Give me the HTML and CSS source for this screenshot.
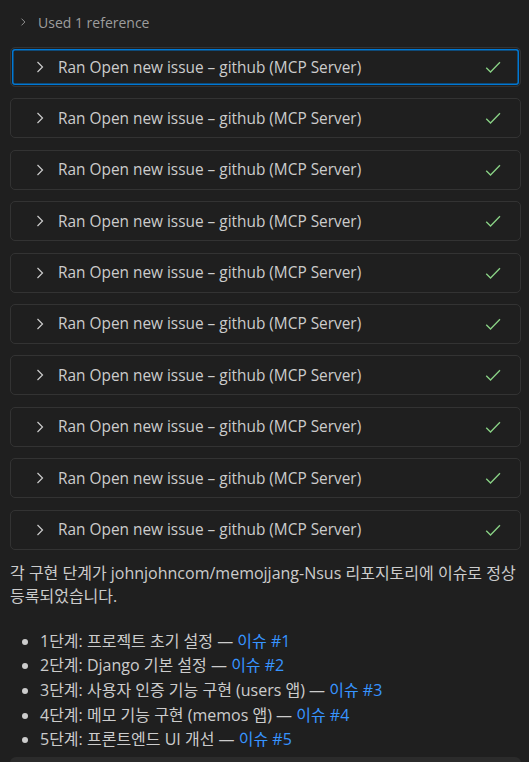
FILE: index.html
```html
<!DOCTYPE html>
<html lang="ko">
<head>
<meta charset="utf-8">
<link rel="stylesheet" href="styles.css">
</head>
<body>
<div class="chat">
  <div class="refs">
    <svg class="chev-small" viewBox="0 0 16 16" width="12" height="12"><path d="M6 3.5l4.5 4.5L6 12.5" fill="none" stroke="currentColor" stroke-width="1.2"/></svg>
    <span>Used 1 reference</span>
  </div>
  <div class="tools">
    <div class="tool focused"><svg class="chev" viewBox="0 0 16 16" width="16" height="16"><path d="M5.5 3l5 5-5 5" fill="none" stroke="currentColor" stroke-width="1.2"/></svg><span class="label">Ran Open new issue – github (MCP Server)</span><svg class="check" viewBox="0 0 16 16" width="18" height="18"><path d="M2 8.6l3.8 3.8L14.2 3.8" fill="none" stroke="currentColor" stroke-width="1.2"/></svg></div>
    <div class="tool"><svg class="chev" viewBox="0 0 16 16" width="16" height="16"><path d="M5.5 3l5 5-5 5" fill="none" stroke="currentColor" stroke-width="1.2"/></svg><span class="label">Ran Open new issue – github (MCP Server)</span><svg class="check" viewBox="0 0 16 16" width="18" height="18"><path d="M2 8.6l3.8 3.8L14.2 3.8" fill="none" stroke="currentColor" stroke-width="1.2"/></svg></div>
    <div class="tool"><svg class="chev" viewBox="0 0 16 16" width="16" height="16"><path d="M5.5 3l5 5-5 5" fill="none" stroke="currentColor" stroke-width="1.2"/></svg><span class="label">Ran Open new issue – github (MCP Server)</span><svg class="check" viewBox="0 0 16 16" width="18" height="18"><path d="M2 8.6l3.8 3.8L14.2 3.8" fill="none" stroke="currentColor" stroke-width="1.2"/></svg></div>
    <div class="tool"><svg class="chev" viewBox="0 0 16 16" width="16" height="16"><path d="M5.5 3l5 5-5 5" fill="none" stroke="currentColor" stroke-width="1.2"/></svg><span class="label">Ran Open new issue – github (MCP Server)</span><svg class="check" viewBox="0 0 16 16" width="18" height="18"><path d="M2 8.6l3.8 3.8L14.2 3.8" fill="none" stroke="currentColor" stroke-width="1.2"/></svg></div>
    <div class="tool"><svg class="chev" viewBox="0 0 16 16" width="16" height="16"><path d="M5.5 3l5 5-5 5" fill="none" stroke="currentColor" stroke-width="1.2"/></svg><span class="label">Ran Open new issue – github (MCP Server)</span><svg class="check" viewBox="0 0 16 16" width="18" height="18"><path d="M2 8.6l3.8 3.8L14.2 3.8" fill="none" stroke="currentColor" stroke-width="1.2"/></svg></div>
    <div class="tool"><svg class="chev" viewBox="0 0 16 16" width="16" height="16"><path d="M5.5 3l5 5-5 5" fill="none" stroke="currentColor" stroke-width="1.2"/></svg><span class="label">Ran Open new issue – github (MCP Server)</span><svg class="check" viewBox="0 0 16 16" width="18" height="18"><path d="M2 8.6l3.8 3.8L14.2 3.8" fill="none" stroke="currentColor" stroke-width="1.2"/></svg></div>
    <div class="tool"><svg class="chev" viewBox="0 0 16 16" width="16" height="16"><path d="M5.5 3l5 5-5 5" fill="none" stroke="currentColor" stroke-width="1.2"/></svg><span class="label">Ran Open new issue – github (MCP Server)</span><svg class="check" viewBox="0 0 16 16" width="18" height="18"><path d="M2 8.6l3.8 3.8L14.2 3.8" fill="none" stroke="currentColor" stroke-width="1.2"/></svg></div>
    <div class="tool"><svg class="chev" viewBox="0 0 16 16" width="16" height="16"><path d="M5.5 3l5 5-5 5" fill="none" stroke="currentColor" stroke-width="1.2"/></svg><span class="label">Ran Open new issue – github (MCP Server)</span><svg class="check" viewBox="0 0 16 16" width="18" height="18"><path d="M2 8.6l3.8 3.8L14.2 3.8" fill="none" stroke="currentColor" stroke-width="1.2"/></svg></div>
    <div class="tool"><svg class="chev" viewBox="0 0 16 16" width="16" height="16"><path d="M5.5 3l5 5-5 5" fill="none" stroke="currentColor" stroke-width="1.2"/></svg><span class="label">Ran Open new issue – github (MCP Server)</span><svg class="check" viewBox="0 0 16 16" width="18" height="18"><path d="M2 8.6l3.8 3.8L14.2 3.8" fill="none" stroke="currentColor" stroke-width="1.2"/></svg></div>
    <div class="tool"><svg class="chev" viewBox="0 0 16 16" width="16" height="16"><path d="M5.5 3l5 5-5 5" fill="none" stroke="currentColor" stroke-width="1.2"/></svg><span class="label">Ran Open new issue – github (MCP Server)</span><svg class="check" viewBox="0 0 16 16" width="18" height="18"><path d="M2 8.6l3.8 3.8L14.2 3.8" fill="none" stroke="currentColor" stroke-width="1.2"/></svg></div>
  </div>
  <p class="summary">각 구현 단계가 johnjohncom/memojjang-Nsus 리포지토리에 이슈로 정상 등록되었습니다.</p>
  <ul class="steps">
    <li>1단계: 프로젝트 초기 설정 — <a href="#">이슈 #1</a></li>
    <li>2단계: Django 기본 설정 — <a href="#">이슈 #2</a></li>
    <li>3단계: 사용자 인증 기능 구현 (users 앱) — <a href="#">이슈 #3</a></li>
    <li>4단계: 메모 기능 구현 (memos 앱) — <a href="#">이슈 #4</a></li>
    <li>5단계: 프론트엔드 UI 개선 — <a href="#">이슈 #5</a></li>
  </ul>
  <div class="next"></div>
</div>
</body>
</html>
```

FILE: styles.css
```css
html, body {
  margin: 0;
  padding: 0;
  background: #1f1f1f;
  height: 100%;
  overflow: hidden;
}
body {
  font-family: "Open Sans", "Noto Sans CJK KR", sans-serif;
  color: #cccccc;
}
.chat {
  padding: 0 8px 0 10px;
}
.refs {
  display: flex;
  align-items: center;
  height: 44px;
  padding-left: 7px;
  gap: 9px;
  color: #9d9d9d;
  font-size: 14px;
}
.chev-small { color: #9d9d9d; }
.tools {
  display: flex;
  flex-direction: column;
  gap: 11.4px;
  margin-top: 3px;
}
.tool {
  box-sizing: border-box;
  height: 40px;
  border: 1px solid #333333;
  border-radius: 5px;
  display: flex;
  align-items: center;
  padding-left: 21px;
  padding-right: 18px;
  font-size: 15.4px;
  color: #cccccc;
}
.tool.focused {
  box-shadow: inset 0 0 0 1px #1f1f1f, inset 0 0 0 2.5px #0078d4;
}
.chev { color: #cccccc; flex: none; }
.label { margin-left: 10px; flex: 1; white-space: nowrap; }
.check { color: #89d185; flex: none; }
.summary {
  margin: 12px 0 0 0;
  font-size: 16px;
  line-height: 23px;
}
.steps {
  margin: 21px 0 0 0;
  padding-left: 30px;
  font-size: 16px;
  line-height: 24.7px;
}
.steps a {
  color: #3794ff;
  text-decoration: none;
}
.next {
  margin-top: 5px;
  height: 40px;
  background: #2b2b2b;
  border-radius: 6px;
}
```
